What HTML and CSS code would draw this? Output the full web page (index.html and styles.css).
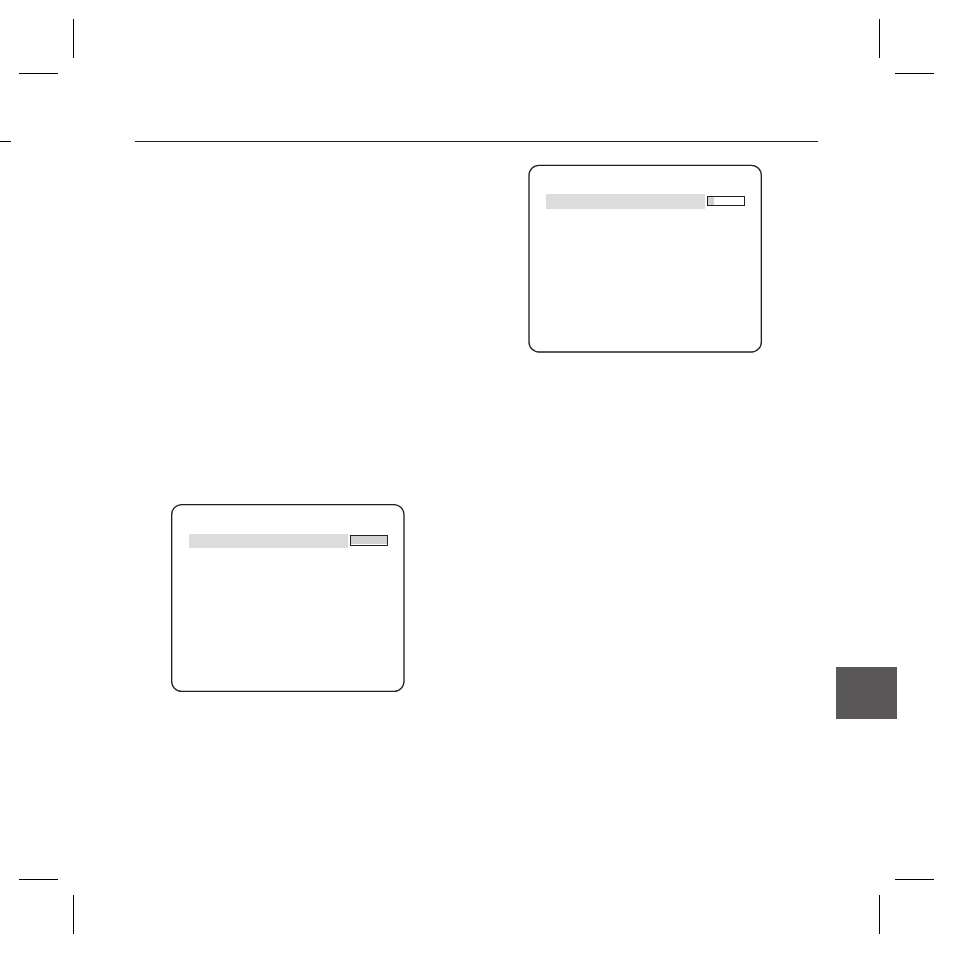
FILE: index.html
```html
<!DOCTYPE html>
<html lang="en">

<head>
  <meta charset="utf-8">
  <meta content="width=device-width, initial-scale=1.0" name="viewport">
  <title>Manual page</title>
  <link rel="stylesheet" href="styles.css">
</head>

<body>

  <!-- Top crop marks -->
  <header class="crop-row">
    <svg class="crop" viewBox="0 0 55 55" aria-hidden="true"><path d="M54.5 0V39M0 54.5H39"/></svg>
    <svg class="crop" viewBox="0 0 55 55" aria-hidden="true"><path d="M.5 0V39M16 54.5H55"/></svg>
  </header>

  <main class="main">
    <div class="rules">
      <div class="rule-tick"></div>
      <div class="rule-line"></div>
    </div>

    <div class="content">
      <div class="columns">
        <section class="column column-left">
          <div class="screen">
            <svg class="screen-frame" viewBox="0 0 235 189" aria-hidden="true">
              <rect x=".65" y=".65" width="232.35" height="186.7" rx="10"/>
            </svg>
            <div class="menu-row">
              <div class="menu-bar"></div>
              <div class="gauge"><div class="gauge-fill"></div></div>
            </div>
          </div>
        </section>

        <section class="column column-right">
          <div class="screen">
            <svg class="screen-frame" viewBox="0 0 235 189" aria-hidden="true">
              <rect x="1" y="1.3" width="232.35" height="186.7" rx="10"/>
            </svg>
            <div class="menu-row">
              <div class="menu-bar"></div>
              <div class="gauge"><div class="gauge-fill"></div></div>
            </div>
          </div>
        </section>
      </div>

      <aside class="side-tab"></aside>
    </div>
  </main>

  <!-- Bottom crop marks -->
  <footer class="crop-row">
    <svg class="crop" viewBox="0 0 55 55" aria-hidden="true"><path d="M0 .5H39M54.5 16V55"/></svg>
    <svg class="crop" viewBox="0 0 55 55" aria-hidden="true"><path d="M16 .5H55M.5 16V55"/></svg>
  </footer>

</body>

</html>
```

FILE: styles.css
```css
* {
    box-sizing: border-box;
}

body {
    display: flex;
    flex-direction: column;
    min-height: 100vh;
    margin: 0;
    background-color: #fff;
    font-family: "Liberation Sans", Arial, sans-serif;
}

.crop-row {
    display: flex;
    justify-content: space-between;
}

header.crop-row {
    padding: 19px 19px 0;
}

footer.crop-row {
    padding: 0 19px 19px;
}

.crop {
    display: block;
    width: 55px;
    height: 55px;
    fill: none;
    stroke: #000;
    stroke-width: 1;
}

.main {
    flex: 1;
    padding-top: 67px;
}

/* line across the top of the page */
.rules {
    display: flex;
    padding-right: 135px;
}

.rule-tick {
    width: 11px;
    height: 1px;
    margin-right: 124px;
    background-color: #000;
}

.rule-line {
    flex: 1;
    height: 1px;
    background-color: #231f20;
}

.content {
    display: flex;
    align-items: flex-start;
    gap: 18px;
    padding: 0 56px 0 135px;
}

.columns {
    display: grid;
    flex: 1;
    grid-template-columns: 1fr 1fr;
    gap: 31px;
}

.column {
    padding-left: 36px;
}

.column-left {
    padding-top: 362px;
}

.column-right {
    padding-top: 22px;
}

/* monitor screens */
.screen {
    position: relative;
    width: 235px;
    height: 189px;
    padding: 30px 18px;
}

.screen-frame {
    position: absolute;
    top: 0;
    left: 0;
    width: 100%;
    height: 100%;
    fill: none;
    stroke: #231f20;
    stroke-width: 1.35;
}

.menu-row {
    display: flex;
    align-items: flex-start;
    gap: 2px;
}

.menu-bar {
    width: 159px;
    height: 15px;
    background-color: #dcdcdc;
}

.gauge {
    width: 38px;
    height: 10px;
    margin-top: 2px;
    border: 1px solid #231f20;
}

.gauge-fill {
    width: 6px;
    height: 100%;
    background-color: #d1d3d2;
}

.column-left .menu-bar {
    height: 14px;
}

.column-left .gauge {
    height: 11px;
    margin-top: 1px;
    padding-bottom: 1px;
}

.column-left .gauge-fill {
    width: 100%;
}

.side-tab {
    width: 61px;
    height: 52px;
    margin-top: 525px;
    background-color: #5a5758;
}
```
